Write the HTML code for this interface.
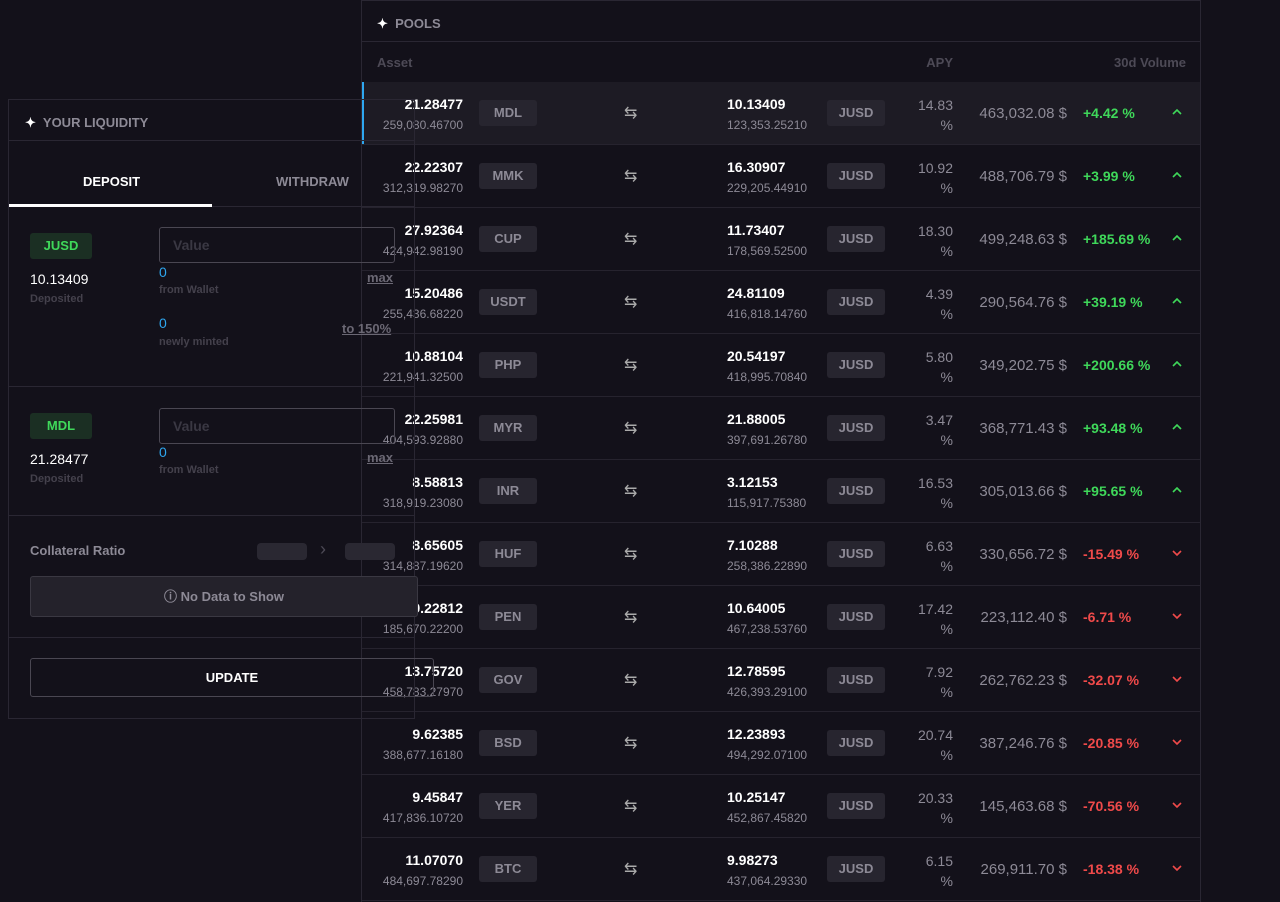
<!DOCTYPE html>
<html><head><meta charset="utf-8"><style>
*{margin:0;padding:0;box-sizing:border-box}
body{width:1280px;height:902px;background:#13111a;font-family:"Liberation Sans",sans-serif;color:#fff;position:relative;overflow:hidden}
.a{position:absolute;white-space:nowrap}
.pool{position:absolute;left:361px;top:0;width:840px;height:902px;border-left:1px solid #2a2733;border-right:1px solid #2a2733}
.row{position:absolute;left:0;width:838px;height:63px;border-bottom:1px solid #26232e}
.row .n1{position:absolute;right:737px;top:14px;font-size:14px;font-weight:bold}
.row .s1{position:absolute;right:737px;top:36px;font-size:12px;color:#8d8a96}
.bd{position:absolute;height:26px;width:58px;top:18px;background:#27252f;border-radius:3px;color:#8d8a96;font-size:13px;font-weight:bold;text-align:center;line-height:26px}
.row .sw{position:absolute;left:262px;top:21px;font-size:16px;color:#aaa}
.row .n2{position:absolute;left:365px;top:14px;font-size:14px;font-weight:bold}
.row .s2{position:absolute;left:365px;top:36px;font-size:12px;color:#8d8a96}
.row .ap{position:absolute;right:247px;top:13px;font-size:14px;color:#8d8a96;text-align:right;line-height:20px}
.row .vo{position:absolute;right:133px;top:23px;font-size:15px;color:#8d8a96}
.row .pc{position:absolute;left:721px;top:23px;font-size:14px;font-weight:bold}
.g{color:#3fd85a}.r{color:#f04a4a}
.row .ch{position:absolute;left:808px;top:25px;width:14px;height:10px}
.lp{position:absolute;left:8px;top:99px;width:407px;height:620px;border:1px solid #2a2733}
.hl{border-bottom:1px solid #2a2733}
.tok{position:absolute;width:62px;height:26px;background:#1b2f23;color:#3fd85a;border-radius:3px;font-weight:bold;font-size:13px;text-align:center;line-height:26px}
.inp{position:absolute;width:236px;height:36px;border:1px solid #4a4752;border-radius:3px;color:#3a3843;font-weight:bold;font-size:14px;padding:9px 13px}
.bl{color:#2ea7f0;font-size:14px}
.lb{color:#44414c;font-size:11px;font-weight:bold}
.ul{color:#6b6874;text-decoration:underline;font-size:13px;font-weight:bold}
</style></head><body>
<div class="pool">
 <div class="a" style="left:0;top:0;width:838px;height:42px;border-top:1px solid #2a2733;border-bottom:1px solid #2a2733"></div>
 <div class="a" style="left:15px;top:16px;font-size:13px;font-weight:bold;color:#8d8a96"><span style="color:#fff">✦</span>&nbsp; POOLS</div>
 <div class="a" style="left:15px;top:55px;font-size:13px;font-weight:bold;color:#4d4a56">Asset</div>
 <div class="a" style="right:247px;top:55px;font-size:13px;font-weight:bold;color:#4d4a56">APY</div>
 <div class="a" style="right:14px;top:55px;font-size:13px;font-weight:bold;color:#4d4a56">30d Volume</div>
 <div class="row" style="top:82px;background:#1d1b24;box-shadow:inset 2px 0 0 #2ea7f0"><div class="n1">21.28477</div><div class="s1">259,080.46700</div><div class="bd" style="left:117px">MDL</div><div class="sw">⇆</div><div class="n2">10.13409</div><div class="s2">123,353.25210</div><div class="bd" style="left:465px">JUSD</div><div class="ap">14.83<br>%</div><div class="vo">463,032.08 $</div><div class="pc g">+4.42 %</div><svg class="ch" viewBox="0 0 14 10"><path d="M3 7l4-4 4 4" stroke="#3fd85a" stroke-width="1.6" fill="none"/></svg></div>
 <div class="row" style="top:145px"><div class="n1">22.22307</div><div class="s1">312,319.98270</div><div class="bd" style="left:117px">MMK</div><div class="sw">⇆</div><div class="n2">16.30907</div><div class="s2">229,205.44910</div><div class="bd" style="left:465px">JUSD</div><div class="ap">10.92<br>%</div><div class="vo">488,706.79 $</div><div class="pc g">+3.99 %</div><svg class="ch" viewBox="0 0 14 10"><path d="M3 7l4-4 4 4" stroke="#3fd85a" stroke-width="1.6" fill="none"/></svg></div>
 <div class="row" style="top:208px"><div class="n1">27.92364</div><div class="s1">424,942.98190</div><div class="bd" style="left:117px">CUP</div><div class="sw">⇆</div><div class="n2">11.73407</div><div class="s2">178,569.52500</div><div class="bd" style="left:465px">JUSD</div><div class="ap">18.30<br>%</div><div class="vo">499,248.63 $</div><div class="pc g">+185.69 %</div><svg class="ch" viewBox="0 0 14 10"><path d="M3 7l4-4 4 4" stroke="#3fd85a" stroke-width="1.6" fill="none"/></svg></div>
 <div class="row" style="top:271px"><div class="n1">15.20486</div><div class="s1">255,436.68220</div><div class="bd" style="left:117px">USDT</div><div class="sw">⇆</div><div class="n2">24.81109</div><div class="s2">416,818.14760</div><div class="bd" style="left:465px">JUSD</div><div class="ap">4.39<br>%</div><div class="vo">290,564.76 $</div><div class="pc g">+39.19 %</div><svg class="ch" viewBox="0 0 14 10"><path d="M3 7l4-4 4 4" stroke="#3fd85a" stroke-width="1.6" fill="none"/></svg></div>
 <div class="row" style="top:334px"><div class="n1">10.88104</div><div class="s1">221,941.32500</div><div class="bd" style="left:117px">PHP</div><div class="sw">⇆</div><div class="n2">20.54197</div><div class="s2">418,995.70840</div><div class="bd" style="left:465px">JUSD</div><div class="ap">5.80<br>%</div><div class="vo">349,202.75 $</div><div class="pc g">+200.66 %</div><svg class="ch" viewBox="0 0 14 10"><path d="M3 7l4-4 4 4" stroke="#3fd85a" stroke-width="1.6" fill="none"/></svg></div>
 <div class="row" style="top:397px"><div class="n1">22.25981</div><div class="s1">404,593.92880</div><div class="bd" style="left:117px">MYR</div><div class="sw">⇆</div><div class="n2">21.88005</div><div class="s2">397,691.26780</div><div class="bd" style="left:465px">JUSD</div><div class="ap">3.47<br>%</div><div class="vo">368,771.43 $</div><div class="pc g">+93.48 %</div><svg class="ch" viewBox="0 0 14 10"><path d="M3 7l4-4 4 4" stroke="#3fd85a" stroke-width="1.6" fill="none"/></svg></div>
 <div class="row" style="top:460px"><div class="n1">8.58813</div><div class="s1">318,919.23080</div><div class="bd" style="left:117px">INR</div><div class="sw">⇆</div><div class="n2">3.12153</div><div class="s2">115,917.75380</div><div class="bd" style="left:465px">JUSD</div><div class="ap">16.53<br>%</div><div class="vo">305,013.66 $</div><div class="pc g">+95.65 %</div><svg class="ch" viewBox="0 0 14 10"><path d="M3 7l4-4 4 4" stroke="#3fd85a" stroke-width="1.6" fill="none"/></svg></div>
 <div class="row" style="top:523px"><div class="n1">8.65605</div><div class="s1">314,887.19620</div><div class="bd" style="left:117px">HUF</div><div class="sw">⇆</div><div class="n2">7.10288</div><div class="s2">258,386.22890</div><div class="bd" style="left:465px">JUSD</div><div class="ap">6.63<br>%</div><div class="vo">330,656.72 $</div><div class="pc r">-15.49 %</div><svg class="ch" viewBox="0 0 14 10"><path d="M3 3l4 4 4-4" stroke="#f04a4a" stroke-width="1.6" fill="none"/></svg></div>
 <div class="row" style="top:586px"><div class="n1">9.22812</div><div class="s1">185,670.22200</div><div class="bd" style="left:117px">PEN</div><div class="sw">⇆</div><div class="n2">10.64005</div><div class="s2">467,238.53760</div><div class="bd" style="left:465px">JUSD</div><div class="ap">17.42<br>%</div><div class="vo">223,112.40 $</div><div class="pc r">-6.71 %</div><svg class="ch" viewBox="0 0 14 10"><path d="M3 3l4 4 4-4" stroke="#f04a4a" stroke-width="1.6" fill="none"/></svg></div>
 <div class="row" style="top:649px"><div class="n1">13.75720</div><div class="s1">458,783.27970</div><div class="bd" style="left:117px">GOV</div><div class="sw">⇆</div><div class="n2">12.78595</div><div class="s2">426,393.29100</div><div class="bd" style="left:465px">JUSD</div><div class="ap">7.92<br>%</div><div class="vo">262,762.23 $</div><div class="pc r">-32.07 %</div><svg class="ch" viewBox="0 0 14 10"><path d="M3 3l4 4 4-4" stroke="#f04a4a" stroke-width="1.6" fill="none"/></svg></div>
 <div class="row" style="top:712px"><div class="n1">9.62385</div><div class="s1">388,677.16180</div><div class="bd" style="left:117px">BSD</div><div class="sw">⇆</div><div class="n2">12.23893</div><div class="s2">494,292.07100</div><div class="bd" style="left:465px">JUSD</div><div class="ap">20.74<br>%</div><div class="vo">387,246.76 $</div><div class="pc r">-20.85 %</div><svg class="ch" viewBox="0 0 14 10"><path d="M3 3l4 4 4-4" stroke="#f04a4a" stroke-width="1.6" fill="none"/></svg></div>
 <div class="row" style="top:775px"><div class="n1">9.45847</div><div class="s1">417,836.10720</div><div class="bd" style="left:117px">YER</div><div class="sw">⇆</div><div class="n2">10.25147</div><div class="s2">452,867.45820</div><div class="bd" style="left:465px">JUSD</div><div class="ap">20.33<br>%</div><div class="vo">145,463.68 $</div><div class="pc r">-70.56 %</div><svg class="ch" viewBox="0 0 14 10"><path d="M3 3l4 4 4-4" stroke="#f04a4a" stroke-width="1.6" fill="none"/></svg></div>
 <div class="row" style="top:838px"><div class="n1">11.07070</div><div class="s1">484,697.78290</div><div class="bd" style="left:117px">BTC</div><div class="sw">⇆</div><div class="n2">9.98273</div><div class="s2">437,064.29330</div><div class="bd" style="left:465px">JUSD</div><div class="ap">6.15<br>%</div><div class="vo">269,911.70 $</div><div class="pc r">-18.38 %</div><svg class="ch" viewBox="0 0 14 10"><path d="M3 3l4 4 4-4" stroke="#f04a4a" stroke-width="1.6" fill="none"/></svg></div>
</div>

<div class="lp">
 <div class="a hl" style="left:0;top:0;width:405px;height:41px"></div>
 <div class="a" style="left:16px;top:15px;font-size:13px;font-weight:bold;color:#8d8a96"><span style="color:#fff">✦</span>&nbsp; YOUR LIQUIDITY</div>
 <div class="a" style="left:0;top:41px;width:405px;height:66px;border-bottom:1px solid #2a2733"></div>
 <div class="a" style="left:74px;top:74px;font-size:13px;font-weight:bold">DEPOSIT</div>
 <div class="a" style="left:267px;top:74px;font-size:13px;font-weight:bold;color:#8d8a96">WITHDRAW</div>
 <div class="a" style="left:0;top:104px;width:203px;height:3px;background:#fff"></div>
 <div class="tok" style="left:21px;top:133px">JUSD</div>
 <div class="a" style="left:21px;top:171px;font-size:14px">10.13409</div>
 <div class="a lb" style="left:21px;top:193px">Deposited</div>
 <div class="inp" style="left:150px;top:127px">Value</div>
 <div class="a bl" style="left:150px;top:164px">0</div>
 <div class="a lb" style="left:150px;top:184px">from Wallet</div>
 <div class="a ul" style="left:358px;top:170px">max</div>
 <div class="a bl" style="left:150px;top:215px">0</div>
 <div class="a lb" style="left:150px;top:236px">newly minted</div>
 <div class="a ul" style="left:333px;top:221px">to 150%</div>
 <div class="a" style="left:0;top:286px;width:405px;border-top:1px solid #2a2733"></div>
 <div class="tok" style="left:21px;top:313px">MDL</div>
 <div class="a" style="left:21px;top:351px;font-size:14px">21.28477</div>
 <div class="a lb" style="left:21px;top:373px">Deposited</div>
 <div class="inp" style="left:150px;top:308px">Value</div>
 <div class="a bl" style="left:150px;top:344px">0</div>
 <div class="a lb" style="left:150px;top:364px">from Wallet</div>
 <div class="a ul" style="left:358px;top:350px">max</div>
 <div class="a" style="left:0;top:415px;width:405px;border-top:1px solid #2a2733"></div>
 <div class="a" style="left:21px;top:443px;font-size:13px;font-weight:bold;color:#8d8a96">Collateral Ratio</div>
 <div class="a" style="left:248px;top:443px;width:50px;height:17px;background:#2a2832;border-radius:4px"></div>
 <div class="a" style="left:311px;top:439px;color:#4d4a56;font-size:18px">›</div>
 <div class="a" style="left:336px;top:443px;width:50px;height:17px;background:#2a2832;border-radius:4px"></div>
 <div class="a" style="left:21px;top:476px;width:388px;height:41px;background:#24222b;border:1px solid #3a3842;border-radius:3px;color:#8d8a96;font-size:13px;font-weight:bold;text-align:center;line-height:39px">ⓘ No Data to Show</div>
 <div class="a" style="left:0;top:537px;width:405px;border-top:1px solid #2a2733"></div>
 <div class="a" style="left:21px;top:558px;width:404px;height:39px;border:1px solid #4a4752;border-radius:3px;font-size:13px;font-weight:bold;text-align:center;line-height:37px">UPDATE</div>
</div>
</body></html>
